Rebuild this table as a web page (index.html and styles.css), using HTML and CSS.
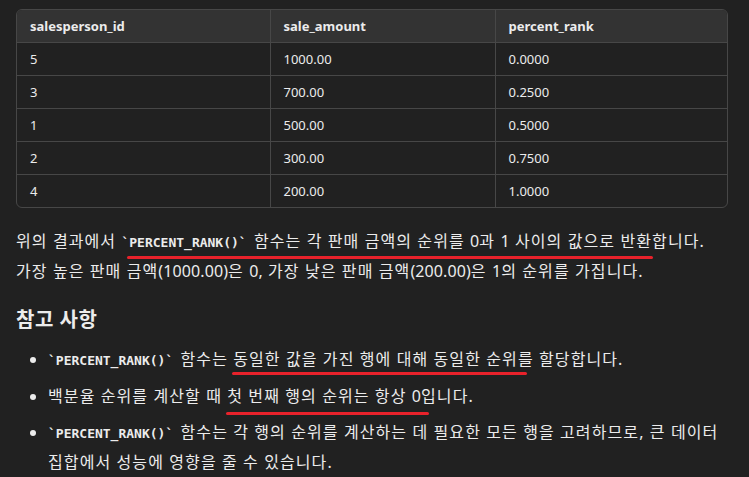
FILE: index.html
```html
<!DOCTYPE html>
<html lang="ko">
<head>
<meta charset="utf-8">
<link rel="stylesheet" href="styles.css">
</head>
<body>
<div class="page">
  <div class="table-wrap">
    <table class="data">
      <colgroup><col class="c1"><col class="c2"><col class="c3"></colgroup>
      <thead>
        <tr><th>salesperson_id</th><th>sale_amount</th><th>percent_rank</th></tr>
      </thead>
      <tbody>
        <tr><td>5</td><td>1000.00</td><td>0.0000</td></tr>
        <tr><td>3</td><td>700.00</td><td>0.2500</td></tr>
        <tr><td>1</td><td>500.00</td><td>0.5000</td></tr>
        <tr><td>2</td><td>300.00</td><td>0.7500</td></tr>
        <tr><td>4</td><td>200.00</td><td>1.0000</td></tr>
      </tbody>
    </table>
  </div>
  <p class="para">위의 결과에서 <span class="hl hl-a"><code>`PERCENT_RANK()`</code> 함수는 각 판매 금액의 순위를 <span class="lat">0</span>과 <span class="lat">1</span> 사이의 값으로 반환</span>합니다.<br>가장 높은 판매 금액<span class="lat">(1000.00)</span>은 <span class="lat">0,</span> 가장 낮은 판매 금액<span class="lat">(200.00)</span>은 <span class="lat">1</span>의 순위를 가집니다.</p>
  <h3 class="heading">참고 사항</h3>
  <ul class="notes">
    <li><code>`PERCENT_RANK()`</code> 함수는 <span class="hl hl-b">동일한 값을 가진 행에 대해 동일한 순위</span>를 할당합니다.</li>
    <li>백분율 순위를 계산할 때 <span class="hl hl-c">첫 번째 행의 순위는 항상 <span class="lat">0</span></span>입니다.</li>
    <li><code>`PERCENT_RANK()`</code> 함수는 각 행의 순위를 계산하는 데 필요한 모든 행을 고려하므로, 큰 데이터 집합에서 성능에 영향을 줄 수 있습니다.</li>
  </ul>
</div>
</body>
</html>
```

FILE: styles.css
```css
html, body {
  margin: 0;
  padding: 0;
  background: #212121;
}
body {
  color: #ececec;
  font-family: "Noto Sans", "Noto Sans CJK KR", sans-serif;
}
.page {
  padding: 9px 21px 0 16px;
}
.table-wrap {
  border: 1px solid #474747;
  border-radius: 6px;
  overflow: hidden;
}
.data {
  width: 100%;
  border-collapse: collapse;
  font-size: 13px;
  table-layout: fixed;
}
.c1 { width: 253px; }
.c2 { width: 225px; }
.data th {
  background: #333333;
  font-weight: 700;
  text-align: left;
  height: 32px;
  padding: 0 13px;
  border-left: 1px solid #474747;
  color: #ececec;
}
.data td {
  height: 32px;
  padding: 0 13px;
  border-top: 1px solid #474747;
  border-left: 1px solid #474747;
}
.data th:first-child, .data td:first-child { border-left: none; }
.para, .notes {
  letter-spacing: 1.1px;
  word-break: keep-all;
}
.lat { letter-spacing: 0.1px; }
.para {
  margin: 19px 0 0;
  font-size: 16px;
  line-height: 28px;
}
code {
  font-family: "DejaVu Sans Mono", "Liberation Mono", monospace;
  font-weight: 700;
  font-size: 13px;
  letter-spacing: 0;
  margin-right: 2px;
}
.heading {
  margin: 20px 0 0;
  font-size: 20px;
  font-weight: 700;
  line-height: 30px;
  letter-spacing: 0.5px;
}
.notes {
  margin: 10px 0 0;
  padding-left: 32px;
  font-size: 16px;
  line-height: 29px;
}
.notes li { margin-bottom: 7px; }
.hl { position: relative; }
.hl::after {
  content: "";
  position: absolute;
  left: -1px;
  right: -6px;
  height: 3px;
  background: #e8222b;
  border-radius: 2px;
}
.hl-a::after { bottom: -7px; left: 6px; right: -1px; }
.hl-b::after { bottom: -5px; right: -9px; }
.hl-c::after { bottom: -8px; right: -8px; }
```
